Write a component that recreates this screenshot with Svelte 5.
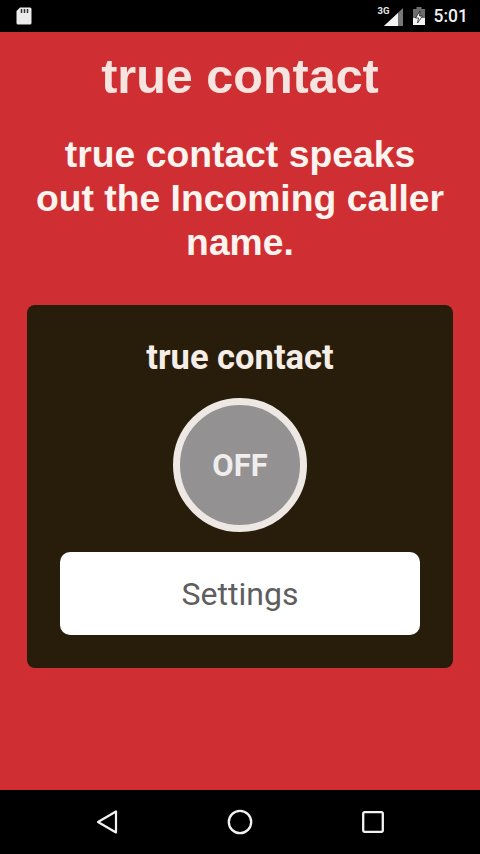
<script>
  const bodyLines = ['true contact speaks', 'out the Incoming caller', 'name.'];
</script>

<div class="screen">
  <header class="status">
    <svg class="sd" width="18" height="20" viewBox="0 0 18 20">
      <path d="M5 1.500h10a1.500 1.500 0 0 1 1.500 1.500v14a1.500 1.500 0 0 1-1.500 1.500H3A1.500 1.500 0 0 1 1.500 17V5z" fill="#ececec"/>
      <path d="M6.500 3v4M9.500 3v4M12.500 3v4" stroke="#333" stroke-width="1.500"/>
    </svg>
    <div class="status-right">
      <div class="signal">
        <span class="net">3G</span>
        <svg width="21" height="20" viewBox="0 0 21 20">
          <path d="M1 19 20 1v18z" fill="#777"/>
          <path d="M1 19 15 6v13z" fill="#f4f4f4"/>
        </svg>
      </div>
      <svg class="battery" width="14" height="20" viewBox="0 0 14 20">
        <path d="M4.500 1h5v2H13v16H1V3h3.500z" fill="#6e6e6e"/>
        <path d="M1 12h12v7H1z" fill="#f4f4f4"/>
        <path d="M8 5 3.500 12h3l-1 5 5-7H7.500z" fill="#f4f4f4" stroke="#111" stroke-width=".7"/>
      </svg>
      <span class="time">5:01</span>
    </div>
  </header>

  <main class="content">
    <h1>true contact</h1>
    <p class="lead">
      {#each bodyLines as line}
        <span>{line}</span>
      {/each}
    </p>

    <section class="card">
      <h2>true contact</h2>
      <button class="toggle" type="button">OFF</button>
      <button class="settings" type="button">Settings</button>
    </section>
  </main>

  <nav class="navbar">
    <svg width="24" height="26" viewBox="0 0 24 26">
      <path d="M21 2.500v21L3 13z" fill="none" stroke="#f2f2f2" stroke-width="2.200" stroke-linejoin="round"/>
    </svg>
    <svg width="26" height="26" viewBox="0 0 26 26">
      <circle cx="13" cy="13" r="11.200" fill="none" stroke="#f2f2f2" stroke-width="2.300"/>
    </svg>
    <svg width="24" height="24" viewBox="0 0 24 24">
      <rect x="2.200" y="2.200" width="19.600" height="19.600" rx="1.500" fill="none" stroke="#f2f2f2" stroke-width="2.300"/>
    </svg>
  </nav>
</div>

<style>
  :global(body) {
    margin: 0;
    background: #000;
  }

  .screen {
    width: 480px;
    height: 854px;
    display: flex;
    flex-direction: column;
    overflow: hidden;
    font-family: "Liberation Sans", Arial, sans-serif;
  }

  .status {
    height: 32px;
    flex: none;
    box-sizing: border-box;
    padding: 0 12px 0 15px;
    display: flex;
    align-items: center;
    justify-content: space-between;
    background: #000;
  }

  .status-right {
    display: flex;
    align-items: center;
    gap: 5px;
  }

  .signal {
    position: relative;
    width: 26px;
    height: 22px;
    display: flex;
    justify-content: flex-end;
    align-items: flex-end;
  }

  .net {
    position: absolute;
    left: 0;
    top: 0;
    font: 700 9.500px "Roboto", sans-serif;
    color: #e8e8e8;
  }

  .battery {
    margin-left: 3px;
  }

  .time {
    margin-left: 3px;
    font: 500 17.500px "Roboto", sans-serif;
    color: #f0f0f0;
  }

  .content {
    flex: 1;
    background: #cf2f32;
    display: flex;
    flex-direction: column;
    align-items: center;
  }

  h1 {
    margin: 14px 0 0;
    height: 60px;
    font-size: 48.500px;
    line-height: 60px;
    font-weight: 700;
    color: #f6e4e0;
  }

  .lead {
    margin: 26px 0 0;
    font-size: 37.300px;
    line-height: 44px;
    font-weight: 700;
    color: #fdf4f0;
    text-align: center;
  }

  .lead span {
    display: block;
  }

  .card {
    box-sizing: border-box;
    width: 426px;
    height: 363px;
    margin-top: 41px;
    padding-top: 33px;
    border-radius: 8px;
    background: #281d0a;
    display: flex;
    flex-direction: column;
    align-items: center;
  }

  h2 {
    margin: 0;
    font-family: "Roboto", sans-serif;
    font-size: 34.500px;
    line-height: 38px;
    font-weight: 700;
    color: #f6eee6;
  }

  .toggle {
    box-sizing: border-box;
    width: 134px;
    height: 134px;
    margin-top: 22px;
    padding: 0;
    border: 7px solid #eee8e4;
    border-radius: 50%;
    background: #939192;
    color: #f0eded;
    font: 700 31px "Roboto", sans-serif;
  }

  .settings {
    width: 360px;
    height: 83px;
    margin-top: 20px;
    padding: 0;
    border: none;
    border-radius: 10px;
    background: #fff;
    color: #5e5e5e;
    font: 400 32px "Roboto", sans-serif;
  }

  .navbar {
    height: 64px;
    flex: none;
    box-sizing: border-box;
    padding: 0 95px;
    display: flex;
    align-items: center;
    justify-content: space-between;
    background: #000;
  }
</style>
